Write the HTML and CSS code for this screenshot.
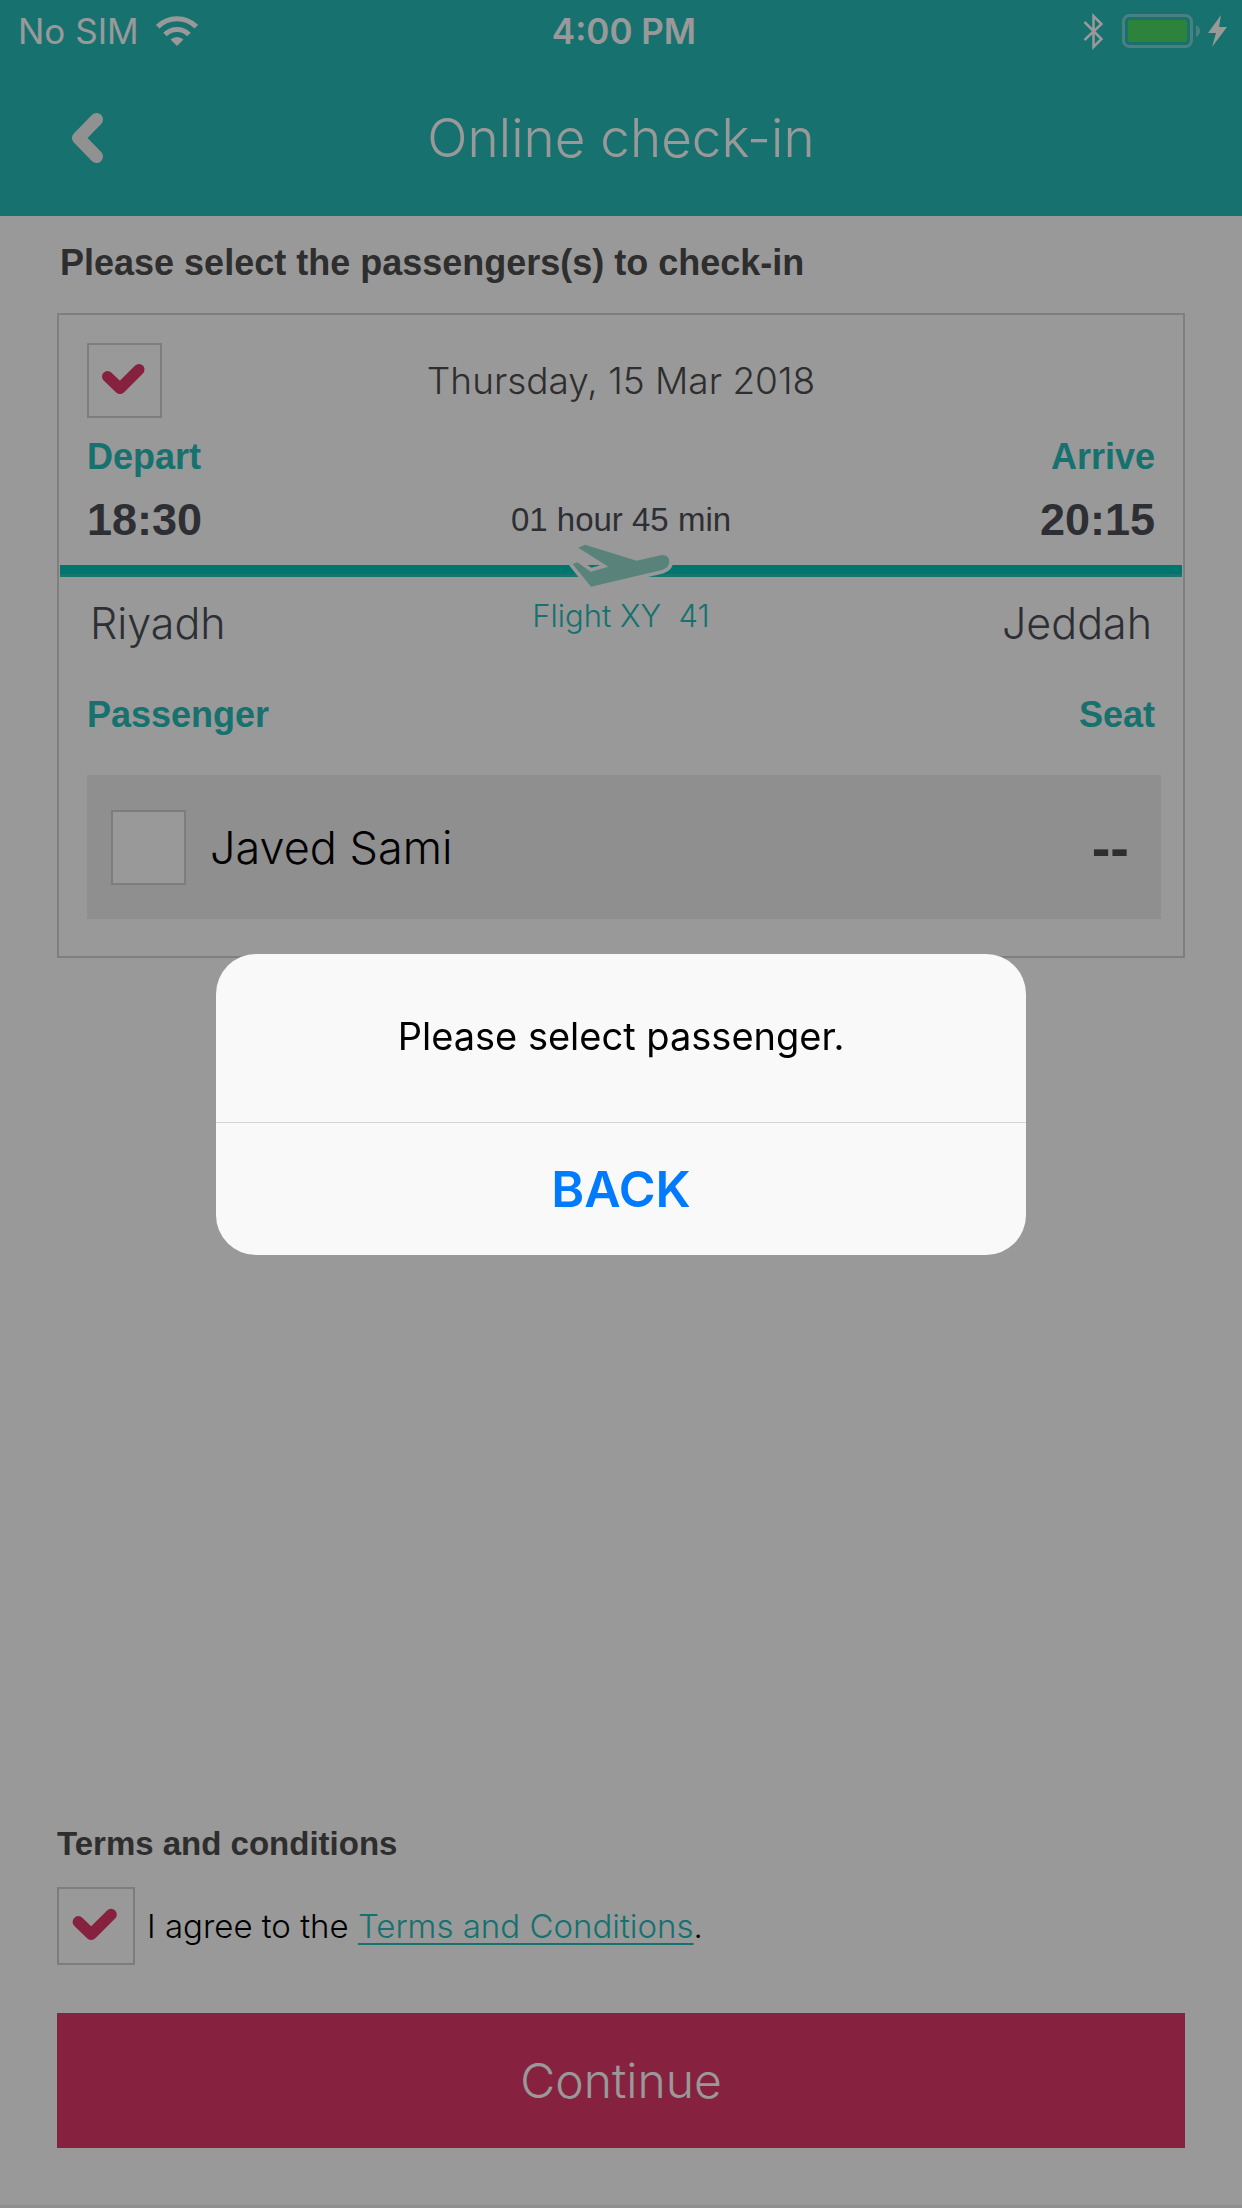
FILE: index.html
```html
<!DOCTYPE html>
<html lang="en">
<head>
<meta charset="utf-8">
<meta name="viewport" content="width=device-width, initial-scale=1">
<title>Online check-in</title>
<link rel="stylesheet" href="styles.css">
</head>
<body>
<div class="screen">
  <header class="header">
    <div class="status">
      <div class="status-left">
        <span>No SIM</span>
        <svg class="wifi" viewBox="0 0 42 30" aria-hidden="true">
          <path d="M21 30L14.500 23.500A9.500 9.500 0 0 1 27.500 23.500Z" fill="#fff"/>
          <path d="M9 18.500A17 17 0 0 1 33 18.500" fill="none" stroke="#fff" stroke-width="5"/>
          <path d="M1.700 10.700A27.500 27.500 0 0 1 40.300 10.700" fill="none" stroke="#fff" stroke-width="5"/>
        </svg>
      </div>
      <span class="clock">4:00 PM</span>
      <div class="status-right">
        <svg class="bluetooth" viewBox="0 0 21 37" aria-hidden="true">
          <path d="M1.500 9L18.500 26L10.500 34V3L18.500 11L1.500 27" fill="none" stroke="#fff" stroke-width="2.500"/>
        </svg>
        <svg class="battery" viewBox="0 0 78 34" aria-hidden="true">
          <rect x="1.500" y="1.500" width="68" height="31" rx="6" fill="none" stroke="#fff" stroke-opacity=".4" stroke-width="3"/>
          <rect x="6" y="6" width="59" height="22" rx="2" fill="#4cd964"/>
          <path d="M74 11Q78 13 78 17T74 23Z" fill="#fff" fill-opacity=".4"/>
        </svg>
        <svg class="bolt" viewBox="0 0 19 32" aria-hidden="true">
          <path d="M13 0L0 18H8L4 32L19 12H11Z" fill="#fff"/>
        </svg>
      </div>
    </div>
    <div class="nav">
      <button class="back" type="button" aria-label="Go back">
        <svg viewBox="0 0 32 50" aria-hidden="true">
          <path d="M25.500 6.500L7.500 25L25.500 43.500" fill="none" stroke="#f2f2f2" stroke-width="13" stroke-linecap="round" stroke-linejoin="round"/>
        </svg>
      </button>
      <h1 class="title">Online check-in</h1>
    </div>
  </header>

  <main class="content">
    <h2 class="lead">Please select the passengers(s) to check-in</h2>

    <section class="card">
      <div class="card-row date-row">
        <span class="check">
          <input type="checkbox" checked aria-label="Select flight on Thursday, 15 Mar 2018">
          <svg viewBox="0 0 75 75" aria-hidden="true"><path d="M20.500 33.500L33 45.500L52 26.500"/></svg>
        </span>
        <span class="date">Thursday, 15 Mar 2018</span>
      </div>
      <div class="card-row label-row">
        <span>Depart</span>
        <span>Arrive</span>
      </div>
      <div class="card-row time-row">
        <time class="time">18:30</time>
        <span class="duration">01 hour 45 min</span>
        <time class="time end">20:15</time>
      </div>
      <div class="route">
        <svg class="plane" viewBox="195 30 330 150" aria-hidden="true">
          <path d="M235 53L255 44L410 92L485 75Q507 74 508 95Q508 112 486 120L273 170L218 102L232 97L272 125L325 110Z" fill="none" stroke="#fff" stroke-width="22" stroke-linejoin="round"/>
          <path d="M235 53L255 44L410 92L485 75Q507 74 508 95Q508 112 486 120L273 170L218 102L232 97L272 125L325 110Z" fill="#94dacb"/>
        </svg>
      </div>
      <div class="card-row city-row">
        <span class="city">Riyadh</span>
        <span class="flight">Flight XY&nbsp; 41</span>
        <span class="city end">Jeddah</span>
      </div>
      <div class="card-row label-row passenger-labels">
        <span>Passenger</span>
        <span>Seat</span>
      </div>
      <div class="passenger">
        <span class="check">
          <input type="checkbox" id="passenger-1">
        </span>
        <label class="name" for="passenger-1">Javed Sami</label>
        <span class="seat">--</span>
      </div>
    </section>
  </main>

  <footer class="footer">
    <h2 class="terms-title">Terms and conditions</h2>
    <div class="terms">
      <span class="check check-large">
        <input type="checkbox" id="agree" checked>
        <svg viewBox="0 0 75 75" aria-hidden="true"><path d="M20.500 33.500L33 45.500L52 26.500"/></svg>
      </span>
      <label for="agree">I agree to the <a href="#terms">Terms and Conditions</a>.</label>
    </div>
    <button class="continue" type="button">Continue</button>
  </footer>
</div>

<div class="overlay">
  <div class="alert" role="alertdialog" aria-modal="true" aria-labelledby="alert-text">
    <p class="alert-text" id="alert-text">Please select passenger.</p>
    <button class="alert-button" type="button">BACK</button>
  </div>
</div>
</body>
</html>
```
FILE: styles.css
```css
* {
  box-sizing: border-box;
}

:root {
  --teal: #25bcb9;
  --pink: #df3969;
  --ink: #4d4d4d;
  --light: Inter, "Liberation Sans", sans-serif;
  --bold: "Liberation Sans", Arial, sans-serif;
}

body {
  margin: 0;
  background: #fff;
  color: var(--ink);
  font-family: var(--light);
  font-weight: 300;
}

h1,
h2,
p {
  margin: 0;
}

button {
  border: 0;
  padding: 0;
  background: none;
  font-family: inherit;
}

svg {
  display: block;
}

.screen {
  display: flex;
  flex-direction: column;
  min-height: 100vh;
  border-bottom: 3px solid #efefef;
}

/* Header */
.header {
  background: var(--teal);
  color: #fff;
}

.status {
  display: grid;
  grid-template-columns: 1fr auto 1fr;
  align-items: center;
  height: 62px;
  padding: 0 12px 0 18px;
  font-size: 35px;
  font-weight: 400;
}

.status-left,
.status-right {
  display: flex;
  align-items: center;
}

.status-left {
  gap: 17px;
}

.status-right {
  justify-content: flex-end;
  padding-right: 3px;
}

.clock {
  font-weight: 600;
}

.wifi {
  width: 42px;
  height: 30px;
}

.bluetooth {
  width: 21px;
  height: 37px;
  margin-right: 18px;
}

.battery {
  width: 78px;
  height: 34px;
  margin-right: 8px;
}

.bolt {
  width: 19px;
  height: 32px;
}

.nav {
  display: grid;
  grid-template-columns: 1fr auto 1fr;
  align-items: center;
  height: 154px;
  padding: 0 71px 2px;
}

.back {
  justify-self: start;
}

.back svg {
  width: 32px;
  height: 50px;
}

.title {
  font-size: 53px;
  line-height: 64px;
  font-weight: 300;
}

/* Content */
.content {
  padding: 23px 57px 40px;
}

.lead {
  margin-bottom: 26px;
  padding-left: 3px;
  font: bold 36px/48px var(--bold);
}

.card {
  border: 2px solid #d4d4d4;
  padding: 28px 0 37px;
}

.card-row {
  display: grid;
  grid-template-columns: 1fr auto 1fr;
  padding: 0 28px;
}

.end {
  text-align: right;
}

.check {
  display: grid;
  flex: none;
  width: 75px;
  height: 75px;
}

.check-large {
  width: 78px;
  height: 78px;
}

.check input,
.check svg {
  grid-area: 1 / 1;
  width: 100%;
  height: 100%;
  margin: 0;
}

.check input {
  appearance: none;
  border: 2px solid #d0d0d0;
  background: #fff;
}

.check svg {
  pointer-events: none;
  fill: none;
  stroke: var(--pink);
  stroke-width: 11;
  stroke-linecap: round;
  stroke-linejoin: round;
}

.date-row {
  align-items: center;
}

.date {
  font-size: 37px;
}

.label-row {
  display: flex;
  justify-content: space-between;
  margin-top: 15px;
  color: var(--teal);
  font: bold 36px/48px var(--bold);
}

.time-row {
  align-items: center;
  margin-top: 11px;
  color: #4d4f57;
  font-family: var(--bold);
  line-height: 56px;
}

.time {
  font-size: 45px;
  font-weight: bold;
}

.duration {
  font-size: 33px;
  font-weight: 400;
}

.route {
  position: relative;
  height: 12px;
  margin: 17px 1px 18px;
  border-bottom: 3px solid #2cc4bb;
  background: #00c3b6;
}

.plane {
  position: absolute;
  left: 50%;
  top: -25px;
  width: 110px;
  height: 50px;
  margin-left: -56px;
}

.city-row {
  align-items: start;
  padding: 0 31px;
  color: #4d4f57;
}

.city {
  font-size: 43px;
  line-height: 56px;
}

.flight {
  color: var(--teal);
  font-size: 31px;
  line-height: 42px;
}

.passenger-labels {
  margin-top: 40px;
}

.passenger {
  display: flex;
  align-items: center;
  gap: 24px;
  margin: 36px 22px 0 28px;
  padding: 35px 32px 34px 24px;
  background: #efefef;
  color: #000;
}

.name {
  font-size: 45px;
  line-height: 56px;
}

.seat {
  margin-left: auto;
  color: var(--ink);
  font: bold 56px/56px var(--bold);
}

/* Footer */
.footer {
  margin-top: auto;
  padding: 0 57px 57px;
}

.terms-title {
  margin-bottom: 23px;
  font: bold 33px/40px var(--bold);
}

.terms {
  display: flex;
  align-items: center;
  gap: 12px;
  margin-bottom: 48px;
  color: #000;
  font-size: 33px;
}

.terms a {
  color: var(--teal);
  text-decoration-thickness: 2px;
  text-underline-offset: 5px;
  text-decoration-skip-ink: none;
}

.continue {
  display: block;
  width: 100%;
  height: 135px;
  background: var(--pink);
  color: #fff;
  font-size: 48px;
  font-weight: 300;
}

/* Alert */
.overlay {
  position: fixed;
  inset: 0;
  display: flex;
  align-items: center;
  justify-content: center;
  padding: 40px;
  background: rgba(0, 0, 0, 0.4);
}

.alert {
  width: 100%;
  max-width: 810px;
  overflow: hidden;
  border-radius: 40px;
  background: #f9f9f9;
  color: #000;
  text-align: center;
}

.alert-text {
  padding: 54px 40px 58px;
  font-size: 38px;
  line-height: 56px;
  font-weight: 400;
}

.alert-button {
  display: block;
  width: 100%;
  height: 133px;
  border-top: 1px solid #d4d4d8;
  color: #007aff;
  font-size: 50px;
  font-weight: 600;
}
```
